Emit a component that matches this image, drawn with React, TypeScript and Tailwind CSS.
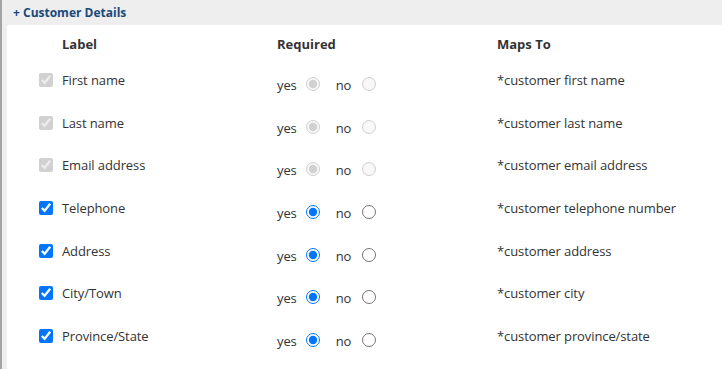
import React from "react";

const rows = [
  { label: "First name", maps: "*customer first name", locked: true },
  { label: "Last name", maps: "*customer last name", locked: true },
  { label: "Email address", maps: "*customer email address", locked: true },
  { label: "Telephone", maps: "*customer telephone number", locked: false },
  { label: "Address", maps: "*customer address", locked: false },
  { label: "City/Town", maps: "*customer city", locked: false },
  { label: "Province/State", maps: "*customer province/state", locked: false },
];

export default function App() {
  return (
    <div
      className="w-[722px] h-[369px] bg-[#eeeeee] border-l-2 border-[#a3a3a3] flex flex-col overflow-hidden text-[#333333]"
      style={{ fontFamily: '"Open Sans", "Noto Sans", sans-serif' }}
    >
      <div className="h-[25px] flex items-center pl-[11px] text-[12px] font-bold text-[#174a7c] shrink-0">
        + Customer Details
      </div>
      <div className="flex-1 bg-white ml-[5px] pl-[32px]">
        <div className="grid grid-cols-[23px_215px_220px_1fr] pt-[10px] h-[46px] text-[13px] font-bold leading-[18px]">
          <div />
          <div>Label</div>
          <div>Required</div>
          <div>Maps To</div>
        </div>
        {rows.map((r, i) => (
          <div
            key={i}
            className="grid grid-cols-[23px_215px_220px_1fr] h-[42.67px] text-[13px] leading-[18px] tracking-[-0.1px]"
          >
            <div className="pt-[2px]">
              <input
                type="checkbox"
                checked
                readOnly
                disabled={r.locked}
                className="m-0 w-[14px] h-[14px] block"
              />
            </div>
            <div>{r.label}</div>
            <div className="flex items-center h-[18px] mt-[5px]">
              <span>yes</span>
              <input
                type="radio"
                name={"req" + i}
                checked
                readOnly
                disabled={r.locked}
                className="m-0 ml-[9px] w-[14px] h-[14px] -mt-[2px]"
              />
              <span className="ml-[16px]">no</span>
              <input
                type="radio"
                name={"req" + i}
                checked={false}
                readOnly
                disabled={r.locked}
                className="m-0 ml-[11px] w-[14px] h-[14px] -mt-[2px]"
              />
            </div>
            <div>{r.maps}</div>
          </div>
        ))}
      </div>
    </div>
  );
}
